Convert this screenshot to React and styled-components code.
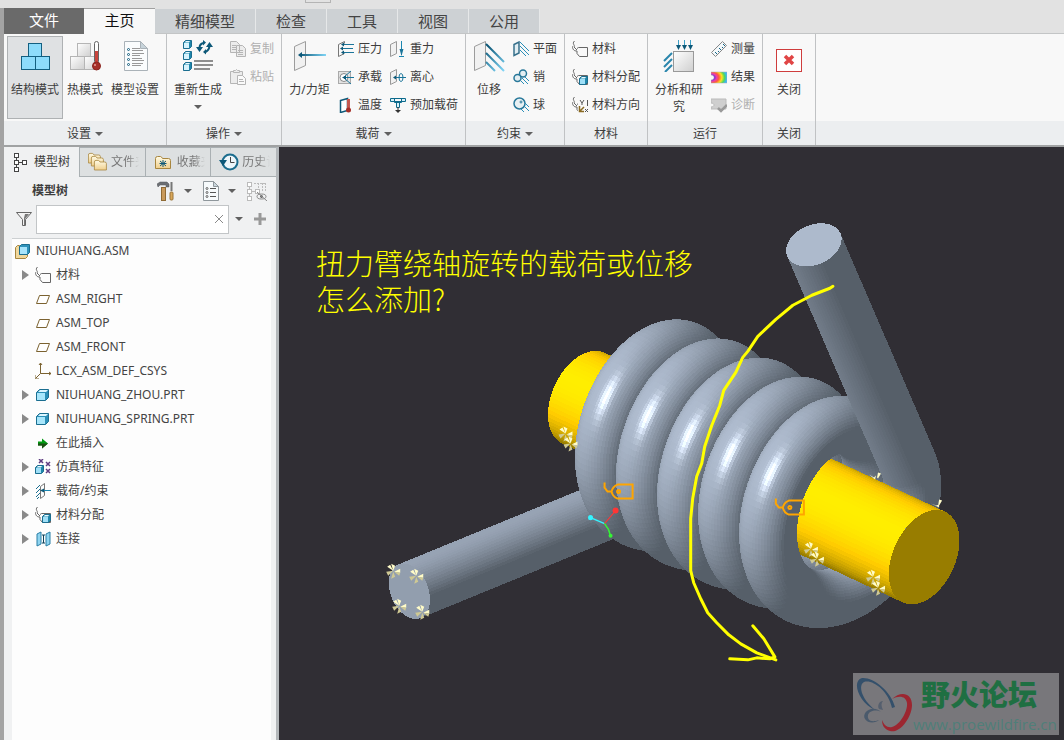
import { useMemo, useState } from "react";
import styled, { createGlobalStyle, css } from "styled-components";

const GlobalStyle = createGlobalStyle`
  * { box-sizing: border-box; }
  body {
    margin: 0;
    background: #e2e2e2;
    color: #3d3d3d;
    font: 12px/16px "Noto Sans", "Noto Sans CJK SC", sans-serif;
  }
  button, input {
    font: inherit;
    color: inherit;
  }
  button {
    border: 0;
    padding: 0;
    background: none;
    cursor: pointer;
  }
  svg { display: block; flex: none; }
`;

/* ---------- layout ---------- */

const Page = styled.div`
  display: flex;
  flex-direction: column;
  height: 100vh;
`;

const TitleStrip = styled.div`
  flex: none;
  height: 8px;
  padding-left: 305px;

  &::before {
    content: "";
    display: block;
    width: 24px;
    height: 2px;
    border: 1px solid #b4b4b4;
    border-top: 0;
  }
`;

const Shell = styled.div`
  flex: 1;
  min-height: 0;
  display: flex;
  flex-direction: column;
  border-left: 4px solid #a3a3a3;
`;

const TabBar = styled.nav`
  flex: none;
  display: flex;
  height: 26px;
  border-bottom: 1px solid #c3c5c6;
`;

const tabLook = {
  file: css`
    background: #6a6a6a;
    color: #fff;
    padding-bottom: 2px;
  `,
  active: css`
    background: #f8f8f8;
    border-top: 1px solid #a0a0a0;
    color: #111;
    padding-bottom: 3px;
  `,
  plain: css`
    background: #cdd1d4;
    color: #444;
    border-right: 1px solid #e6e8e9;
    margin-top: 1px;
    padding-bottom: 1px;
    height: 24px;
  `,
};

const RibbonTab = styled.button`
  width: ${(props) => props.$w}px;
  height: 26px;
  font-size: 15px;
  line-height: 22px;
  ${(props) => tabLook[props.$look]}
`;

const RibbonBar = styled.div`
  flex: none;
  display: flex;
  height: 113px;
  background: linear-gradient(#f8f8f8 87px, #eceef0 87px);
  border-bottom: 2px solid #a0a2a3;
`;

const Group = styled.section`
  display: flex;
  flex-direction: column;
  width: ${(props) => props.$w}px;
  border-right: 1px solid #c0c2c4;
`;

const GroupBody = styled.div`
  display: flex;
  height: 87px;
  padding: 1px 0 0 3px;
`;

const GroupName = styled.div`
  display: flex;
  align-items: center;
  justify-content: center;
  gap: 4px;
  height: 24px;
  padding-top: 1px;
`;

const BigButton = styled.button`
  display: flex;
  flex-direction: column;
  align-items: center;
  width: ${(props) => props.$w}px;
  height: 83px;
  margin-top: 1px;
  padding-top: 3px;
  border: 1px solid ${(props) => (props.$on ? "#aeb1b3" : "transparent")};
  background: ${(props) => (props.$on ? "#dfe1e3" : "none")};
`;

const BigLabel = styled.span`
  margin: 9px -4px 7px;
  line-height: 17px;
  white-space: ${(props) => (props.$wrap ? "normal" : "nowrap")};
  width: ${(props) => (props.$wrap ? "50px" : "auto")};
`;

const Column = styled.div`
  display: flex;
  flex-direction: column;
`;

const SmallButton = styled.button`
  display: flex;
  align-items: center;
  gap: 4px;
  height: 28px;
  padding: 0 4px;
  white-space: nowrap;

  &:disabled {
    color: #b0b0b0;
  }
`;

const Caret = styled.i`
  width: 0;
  border: 4px solid transparent;
  border-top: 4px solid #606060;
  border-bottom: 0;
`;

const Main = styled.main`
  flex: 1;
  min-height: 0;
  display: flex;
`;

const Side = styled.aside`
  flex: none;
  display: flex;
  flex-direction: column;
  width: 275px;
  background: #f0f1f2;
  border-right: 3px solid #b3b7ba;
`;

const SideTabs = styled.div`
  display: flex;
  height: 30px;
`;

const SideTab = styled.button`
  display: flex;
  align-items: center;
  gap: ${(props) => (props.$on ? 6 : 3)}px;
  flex: ${(props) => (props.$on ? "0 0 75px" : "1")};
  min-width: 0;
  padding-left: ${(props) => (props.$on ? 10 : 8)}px;
  padding-bottom: 1px;
  overflow: hidden;
  white-space: nowrap;
  ${(props) =>
    !props.$on &&
    css`
      background: #dde0e1;
      color: #777;
      border: 1px solid #aab0b3;
      border-right: 0;

      span {
        mask-image: linear-gradient(90deg, #000 16px, transparent 28px);
      }
    `}
`;

const SideHead = styled.div`
  display: flex;
  align-items: center;
  height: 27px;
  padding: 0 9px 0 28px;
`;

const SideTitle = styled.h2`
  flex: 1;
  margin: 0;
  font-size: 12px;
  font-weight: 700;
`;

const ToolButton = styled.button`
  display: flex;
  align-items: center;
  gap: 9px;
  margin-left: 11px;
`;

const SearchRow = styled.div`
  display: flex;
  align-items: center;
  height: 34px;
  padding: 0 12px 4px 12px;
  gap: 4px;
`;

const SearchBox = styled.div`
  flex: 1;
  display: flex;
  align-items: center;
  height: 29px;
  padding-right: 5px;
  background: #fff;
  border: 1px solid #c2c5c7;
`;

const SearchInput = styled.input`
  flex: 1;
  min-width: 0;
  height: 100%;
  border: 0;
  outline: 0;
  background: none;
`;

const SearchTools = styled.div`
  display: flex;
  align-items: center;
  gap: 11px;
  padding-left: 2px;
`;

const Tree = styled.ul`
  flex: 1;
  margin: 0 5px 0 8px;
  padding: 0;
  list-style: none;
  background: #fdfdfd;
  border-top: 1px solid #cdd0d2;
`;

const TreeRow = styled.li`
  display: flex;
  align-items: center;
  gap: 5px;
  height: 24px;
  padding-left: ${(props) => (props.$root ? 3 : 10)}px;
  color: #444;
  white-space: nowrap;
`;

const Expander = styled.button`
  width: 8px;
  height: 10px;
  visibility: ${(props) => (props.$hidden ? "hidden" : "visible")};

  &::before {
    content: "";
    display: block;
    width: 0;
    border: 5px solid transparent;
    border-left: 7px solid #8a8a8a;
    border-right: 0;
  }
`;

const Viewport = styled.div`
  flex: 1;
  min-width: 0;
  position: relative;
  overflow: hidden;
  background: #302e34;

  > svg {
    width: 100%;
    height: 100%;
  }
`;

const Note = styled.p`
  position: absolute;
  top: 97px;
  left: 37px;
  margin: 0;
  color: #ffff00;
  font: 300 29px/36px "Noto Sans CJK SC", sans-serif;
  white-space: pre;
`;

const Watermark = styled.a`
  position: absolute;
  right: 5px;
  bottom: 5px;
  display: flex;
  width: 206px;
  height: 62px;
  background: #78777b;
  text-decoration: none;
`;

const WatermarkText = styled.span`
  display: flex;
  flex-direction: column;
  align-items: flex-start;
  color: #4f7f79;
  font: 15px/20px "Open Sans", sans-serif;
  white-space: nowrap;

  b {
    padding-left: 8px;
    color: #1f6f42;
    font: 900 29px/41px "Noto Sans CJK SC", sans-serif;
  }
`;

/* ---------- icons ---------- */

const Icon = ({ s = 16, w = s, h = s, children }) => (
  <svg
    width={w}
    height={h}
    viewBox={`0 0 ${w} ${h}`}
    fill="none"
    stroke="#555"
    aria-hidden="true"
  >
    {children}
  </svg>
);

const Defs = () => (
  <svg width="0" height="0" style={{ position: "absolute" }} aria-hidden="true">
    <defs>
      <linearGradient id="cube" x2="1" y2="1">
        <stop stopColor="#fff" />
        <stop offset="1" stopColor="#cfcfcf" />
      </linearGradient>
      <linearGradient id="ray">
        <stop stopColor="#0d5878" />
        <stop offset="1" stopColor="#7fd4f5" />
      </linearGradient>
      <linearGradient id="beam" gradientUnits="userSpaceOnUse" x1="13" y1="8" x2="31" y2="30">
        <stop stopColor="#0d5878" />
        <stop offset="1" stopColor="#7fd4f5" />
      </linearGradient>
      <radialGradient id="fringe" cx="0" cy=".5" r="1">
        <stop offset=".2" stopColor="#6a2bd9" />
        <stop offset=".35" stopColor="#e83db0" />
        <stop offset=".5" stopColor="#ff5a3c" />
        <stop offset=".68" stopColor="#ffe21f" />
        <stop offset=".85" stopColor="#4fd85a" />
        <stop offset="1" stopColor="#35b6ff" />
      </radialGradient>
      <linearGradient id="folder" x2="0" y2="1">
        <stop stopColor="#fffbe6" />
        <stop offset="1" stopColor="#f0cf8c" />
      </linearGradient>
    </defs>
  </svg>
);

const Blocks = ({ thermal }) => (
  <Icon s={32}>
    <g
      fill={thermal ? "url(#cube)" : "#8ddcfb"}
      stroke={thermal ? "#b5b5b5" : "#135f80"}
      transform={thermal ? "translate(-1 0)" : undefined}
    >
      <rect x="9.5" y="3.5" width="13" height="13" />
      <rect x="2.5" y="16.5" width="14" height="13" />
      <rect x="16.5" y="16.5" width="14" height="13" />
    </g>
    {thermal && (
      <g>
        <rect x="25.5" y="1.5" width="4" height="22" rx="2" fill="#fff" stroke="#666" />
        <path d="M27.5 11v14" stroke="#c9443c" strokeWidth="3" />
        <circle cx="27.5" cy="26" r="4" fill="#a52f28" stroke="#8a241f" />
        <circle cx="26" cy="25" r="1" fill="#e8a09a" stroke="none" />
      </g>
    )}
  </Icon>
);

const ModelSetup = () => (
  <Icon s={32}>
    <path d="M5.5 1.5h16l7 7v22h-23z" fill="#fafcfd" stroke="#aab2b8" />
    <path d="M21.5 1.5v7h7z" fill="#c7d3da" stroke="#aab2b8" />
    {[9.5, 14.5, 19.5, 24.5].map((y, i) => (
      <g key={y}>
        <circle cx="9.5" cy={y} r="1" fill="#fff" stroke="#125d80" />
        <path d={`M13 ${y - 1}h${[8, 12, 10, 11][i]}M13 ${y + 1}h${[11, 8, 12, 9][i]}`} stroke="#999" />
      </g>
    ))}
  </Icon>
);

const MiniCube = ({ x = 0, y = 0, s = 8, face = "#d8f3fd" }) => (
  <g transform={`translate(${x} ${y})`} strokeWidth="1" strokeLinejoin="round">
    <path d={`M.5 2.5L2.5.5H${s + 0.5}v${s - 2}l-2 2H.5z`} fill="#1f86ab" stroke="#1b6e90" />
    <rect x="1" y="3" width={s - 3} height={s - 3} fill={face} stroke="none" />
    <path d={`M1.5 2.5L3 1h${s - 4}l-1 1.5z`} fill="#e8f9ff" stroke="none" />
  </g>
);

const Regenerate = () => (
  <Icon s={32}>
    <MiniCube x={1} y={0} />
    <MiniCube x={1} y={11} />
    <MiniCube x={1} y={22} />
    <g stroke="#0d5878" strokeWidth="2">
      <path d="M17.5 8c0-3 2-4.5 4-5M27.5 5c0 4-1 5.5-4 7" />
    </g>
    <path d="M14 7h7l-3.5 5zM24 7h7l-3.5-5zM21 0l3 2.5-3 3zM24 9l-3 3 3 2.5z" fill="#0d5878" stroke="none" />
    <path d="M12 21h19M12 25h19M12 29h16" stroke="#8e8e8e" strokeWidth="2" />
  </Icon>
);

const Copy = () => (
  <Icon>
    <g fill="#ececec" stroke="#b5b5b5">
      <path d="M.5.5h6l3 3v8h-9zM6.5 4.5h6l3 3v8h-9z" />
      <path d="M2 4.5h4M2 6.5h4M2 8.5h4M8 9.5h5M8 11.5h5M8 13.5h5" />
    </g>
  </Icon>
);

const Paste = () => (
  <Icon>
    <g fill="#ececec" stroke="#b5b5b5">
      <path d="M.5 2.5h12v12H.5z" />
      <path d="M3.5 3.5v-2h2l1-1 1 1h2v2z" />
      <path d="M7.5 6.5h5l3 3v6h-8z" fill="#fafafa" />
      <path d="M9 10.5h4M9 12.5h5" />
    </g>
  </Icon>
);

const panelPath = "M2.5 6.5l11-5v24l-11 5z";

const Force = () => (
  <Icon s={32}>
    <path d={panelPath} transform="translate(-2 0)" fill="#f1f1f1" stroke="#9c9c9c" />
    <rect x="6" y="14" width="26" height="2" fill="url(#ray)" stroke="none" />
    <path d="M4 15l4-3v6z" fill="#0d5878" stroke="none" />
  </Icon>
);

const Displacement = () => (
  <Icon s={32}>
    <path d={panelPath} transform="translate(-1 0)" fill="#f1f1f1" stroke="#9c9c9c" />
    <g stroke="url(#beam)" strokeWidth="2">
      <path d="M13 4l18 18M13 13l18 18M13 22l9 9" />
    </g>
  </Icon>
);

const Pressure = () => (
  <Icon>
    <path d="M.5 3.5l6-3v2M.5 3.5v12l6-3" stroke="#777" />
    <path d="M4 3.5h12M3 7.5h12M4 11.5h12" stroke="#1b759a" />
    <path d="M3 3.5l3-2v4zM2 7.5l3-2v4zM3 11.5l3-2v4z" fill="#0d5878" stroke="none" />
  </Icon>
);

const Bearing = () => (
  <Icon>
    <rect x=".5" y="2.5" width="12" height="12" fill="#e3e3e3" stroke="#aaa" />
    <circle cx="6" cy="8.5" r="4" fill="#fff" stroke="#888" />
    <path d="M5 8.5h11M6 8l7-6M6 9l7 6" stroke="#1b759a" />
    <path d="M4 8.5l4-2v4z" fill="#0d5878" stroke="none" />
  </Icon>
);

const Temperature = () => (
  <Icon>
    <path d="M2.5 3.5l7-2v12l-7 2z" stroke="#0d5878" strokeWidth="1.5" fill="#fff" />
    <path d="M10.5 2v10" stroke="#c4574f" strokeWidth="3" />
    <circle cx="10.5" cy="13" r="2.5" fill="#a52f28" stroke="none" />
  </Icon>
);

const Gravity = () => (
  <Icon>
    <path d="M.5 3.5l6-3v12l-6 3z" fill="#f1f1f1" stroke="#999" />
    <path d="M11.5 0v14M9 15.5h5" stroke="#1b86b0" />
    <path d="M11.5 15l-2-7h4z" fill="#1b759a" stroke="none" />
  </Icon>
);

const Centrifugal = () => (
  <Icon>
    <path d="M.5 3.5l6-3v12l-6 3z" fill="#f1f1f1" stroke="#999" />
    <path d="M4 8.5h12" stroke="#1b759a" />
    <ellipse cx="11" cy="8.5" rx="2" ry="4" stroke="#1b759a" />
    <path d="M3 8.5l3-2v4z" fill="#0d5878" stroke="none" />
  </Icon>
);

const Preload = () => (
  <Icon>
    <path d="M.5 1.5h15v3h-15zM4.5 1.5v4h7v-4M6.5 6v4.5h3V6" stroke="#0d6a8c" fill="#d8f1fa" />
    <path d="M8 10v4" stroke="#333" />
    <path d="M5 13h6l-3 3z" fill="#333" stroke="none" />
  </Icon>
);

const Plane = () => (
  <Icon>
    <path d="M1 3.5l5-2.5v11l-5 2.5z" fill="#e2eef3" stroke="#38718c" strokeWidth="1.5" />
    <path d="M7 1l9 9M7 5l9 9M7 9l6 6" stroke="#2a8fb8" />
  </Icon>
);

const Pin = () => (
  <Icon>
    <circle cx="10" cy="4.5" r="3.5" fill="#e4eef2" stroke="#28789a" strokeWidth="1.5" />
    <circle cx="4.5" cy="9" r="3.5" fill="#e4eef2" stroke="#28789a" strokeWidth="1.5" />
    <path d="M9 9l6 6M12 8l4 4M8 12l3 3" stroke="#2a8fb8" />
  </Icon>
);

const Ball = () => (
  <Icon>
    <circle cx="6.5" cy="6.5" r="5.5" fill="#e8f0f3" stroke="#28789a" strokeWidth="1.5" />
    <circle cx="8" cy="5" r="1" stroke="#28789a" fill="#fff" />
    <path d="M12 6l4 4M11 9l5 5M8 12l3 3" stroke="#2a8fb8" />
  </Icon>
);

const Tag = ({ kind }) => (
  <Icon>
    <path d="M2.5 0c-3 3 1 4-.5 6L5 9M5 7.5l1.5-1h9v9h-8l-2.5-3M0 5c1 4 2 5 5 5v2.5" stroke="#666" />
    {kind === "assign" && <MiniCube x={7} y={7} s={8} face="#9fdff7" />}
    {kind === "orient" && (
      <g>
        <rect x="6" y="4" width="10" height="12" fill="#f8f8f8" stroke="none" />
        <path d="M8 3l2 3 2-3M10 6v2M13 12l3 3M16 12l-3 3M15.5 3v6" stroke="#555" />
        <path d="M7.5 9v5.5H12M8 14l4-4" stroke="#8a6a22" strokeWidth="1.5" />
      </g>
    )}
  </Icon>
);

const Analysis = () => (
  <Icon s={32}>
    <rect x="10.5" y="11.5" width="20" height="20" fill="url(#cube)" stroke="#999" />
    <path d="M15.5 0v7M21.5 0v7M27.5 0v7" stroke="#3e9fc6" />
    <path d="M13 5h5l-2.5 5zM19 5h5l-2.5 5zM25 5h5l-2.5 5z" fill="#0d5878" stroke="none" />
    <path d="M9 13l-8 8M9 19l-8 8M9 25l-7 7" stroke="#2a86ad" strokeWidth="2" />
  </Icon>
);

const Ruler = () => (
  <Icon>
    <path d="M.5 11.5l11-11 4 4-11 11z" fill="#f3f8fa" stroke="#888" />
    <path d="M6 13l-2-2M8 11l-1-1M10 9L8 7M12 7l-1-1M14 5l-2-2" stroke="#146486" />
  </Icon>
);

const Results = () => (
  <Icon>
    <path d="M0 3h16v11H0v-3c4 0 4-5 0-5z" fill="url(#fringe)" stroke="#aaa" strokeWidth=".5" />
  </Icon>
);

const Diagnose = () => (
  <Icon>
    <path d="M0 2h15v10H0v-2c4 0 4-4 0-4z" fill="#cfcfcf" stroke="#bbb" />
    <path d="M7 11l3 3 6-6" stroke="#9a9a9a" strokeWidth="2.5" />
  </Icon>
);

const CloseIcon = () => (
  <Icon s={32}>
    <rect x="3.5" y="9.5" width="25" height="22" fill="#fff" stroke="#cf3d3d" />
    <path d="M12 16l8 8M20 16l-8 8" stroke="#e04545" strokeWidth="3.5" />
  </Icon>
);

const TreeIcon = ({ off }) => (
  <Icon w={off ? 20 : 14} h={20}>
    <g stroke={off ? "#bbb" : "#444"} fill="#fff">
      <path d="M2.5 4v12M2.5 10.5h8" />
      <rect x=".5" y="1.5" width="4" height="4" />
      <rect x=".5" y="8.5" width="4" height="4" />
      <rect x=".5" y="15.5" width="4" height="4" />
      <rect x="8.5" y="8.5" width="4" height="4" />
    </g>
    {off && (
      <g>
        <path d="M7 2.5h12M11.5 2v5M15.5 2v8M18.5 2v8" stroke="#bbb" strokeDasharray="2 1" />
        <ellipse cx="14.5" cy="15.5" rx="4.5" ry="2.5" fill="#f0f1f2" stroke="#888" />
        <circle cx="14.5" cy="15.5" r="1" fill="#888" />
        <path d="M10 11l10 9" stroke="#888" />
      </g>
    )}
  </Icon>
);

const Folder = ({ x = 0, y = 0, s = 1 }) => (
  <path
    transform={`translate(${x} ${y}) scale(${s})`}
    d="M.5 2.5q0-2 2-2h3q1 0 2 2h6q2 0 2 2v8h-15z"
    fill="url(#folder)"
    stroke="#a8863f"
  />
);

const Folders = () => (
  <Icon w={20} h={20}>
    <Folder x={0} y={1} s={0.8} />
    <Folder x={3} y={4} s={0.8} />
    <Folder x={6} y={8} s={0.8} />
  </Icon>
);

const Favorites = () => (
  <Icon w={20} h={18}>
    <Folder x={1} y={3} />
    <path d="M9 7v7M6 8l6 5M12 8l-6 5M5.5 10.5h7" stroke="#0d5878" />
  </Icon>
);

const HistoryIcon = () => (
  <Icon w={20} h={20}>
    <circle cx="11" cy="10" r="7.5" fill="#eef6fa" stroke="#1c6d8e" strokeWidth="2" />
    <path d="M11.5 5v5.5h4" stroke="#444" />
    <path d="M0 8h8l-4 6z" fill="#0d5878" stroke="none" />
  </Icon>
);

const Hammer = () => (
  <Icon w={18} h={20}>
    <path d="M0 3l3-2h7l2 2v3H9V4H3L1 6z" fill="#6c6f74" stroke="#55585c" strokeWidth=".5" />
    <rect x="4.5" y="6.5" width="4" height="13" fill="#c99a5b" stroke="#8f6a35" />
    <path d="M14.5 1v9" stroke="#777" strokeWidth="2" />
    <rect x="13" y="11" width="3" height="8" rx="1" fill="#d9a75a" stroke="#9a7438" />
  </Icon>
);

const DocList = () => (
  <Icon w={16} h={20}>
    <path d="M.5.5h10l5 5v14H.5z" fill="#f6fafc" stroke="#8f979c" />
    <path d="M10.5.5v5h5z" fill="#c9d6dd" stroke="#8f979c" />
    {[7.5, 11.5, 15.5].map((y) => (
      <g key={y}>
        <circle cx="4" cy={y} r="1" stroke="#666" />
        <path d={`M7 ${y}h6`} stroke="#555" />
      </g>
    ))}
  </Icon>
);

const Funnel = () => (
  <Icon>
    <path d="M.5 1.5h15l-6 7v6h-3v-6z" fill="#f3f3f3" stroke="#666" />
    <path d="M9 3h4l-4 5v6H8V7z" fill="#777" stroke="none" />
  </Icon>
);

const Plus = () => (
  <Icon s={12}>
    <path d="M6 0v12M0 6h12" stroke="#999" strokeWidth="3" />
  </Icon>
);

const AsmIcon = () => (
  <Icon>
    <path d="M.5 4.5l2-2h2v9h8v2l-2 2h-10z" fill="#f0d79c" stroke="#a8863f" />
    <path d="M4.5 3.5l2-2h8v8l-2 2h-8z" fill="#2f93bb" stroke="#1b6e90" />
    <path d="M5 4h7v7H5z" fill="#a8e4fb" stroke="none" />
  </Icon>
);

const DatumPlane = () => (
  <Icon>
    <path d="M4.5 4.5h10l-3 8h-10z" stroke="#7b6230" fill="#fff" />
  </Icon>
);

const Csys = () => (
  <Icon>
    <path d="M5.5 0v10.5H16M5.5 10.5L1 15M4 2l1.5-2L7 2M14 9l2 1.5-2 1.5M0 12v4h4" stroke="#7b6230" />
  </Icon>
);

const Part = () => (
  <Icon>
    <path d="M1.5 5.5l3-3h9v8l-3 3h-9z" fill="#2b8fb7" stroke="#1b6e90" />
    <rect x="2" y="6" width="8" height="7" fill="#a8e6fb" stroke="none" />
    <path d="M3 5l2-2h8l-2 2z" fill="#ddf6ff" stroke="none" />
  </Icon>
);

const Insert = () => (
  <Icon>
    <path d="M3 6.5h4v-3l6 5-6 5v-3H3z" fill="#009a10" stroke="none" />
    <path d="M3 8.5h10l-6 5v-3H3z" fill="#1d4d12" stroke="none" />
  </Icon>
);

const SimFeature = () => (
  <Icon>
    <MiniCube x={0} y={6} s={8} face="#9fdff7" />
    <path d="M4 0l4 4M8 0L4 4M11 3l4 4M15 3l-4 4M11 10l4 4M15 10l-4 4" stroke="#5f3d82" strokeWidth="1.5" />
  </Icon>
);

const LoadConstraint = () => (
  <Icon>
    <path d="M5.5 3.5l4-3v12l-4 3z" stroke="#777" />
    <path d="M6 7.5h10" stroke="#1b86b0" />
    <path d="M5 2L1 6M5 6l-4 4M5 10l-4 4M4 14l-2 2" stroke="#1b6e90" />
    <path d="M5 7.5l4-2v4z" fill="#0d5878" stroke="none" />
  </Icon>
);

const Connection = () => (
  <Icon>
    <path d="M2 3l4-2v12l-4 2zM11 3l4-2v12l-4 2z" fill="#8fd4f0" stroke="#2a7fa5" />
    <path d="M8.5 4v8M7 4h3M7 12h3" stroke="#0d4058" />
  </Icon>
);

/* ---------- 3D model ---------- */

// Orthographic view frame: x right, y down, z towards the viewer.
const AXIS = [0.709, 0.331, 0.6225];
const UP = [0.4226, -0.906, 0];
const OUT = [-0.564, -0.263, 0.7826];
const LIGHT = [-0.55, -0.5, 0.67];
const HALF = [-0.3, -0.27, 0.913];

const ORIGIN = [665, 437, 0];
const PITCH = 57.8;
const COIL_RADIUS = 87;
const WIRE_RADIUS = 29;
const ROD_RADIUS = 50;
const START = 214;
const END = 2131;

const rad = (deg) => (deg * Math.PI) / 180;
const dot = (a, b) => a[0] * b[0] + a[1] * b[1] + a[2] * b[2];
const mix = (...terms) =>
  [0, 1, 2].map((i) => terms.reduce((sum, [v, k]) => sum + v[i] * k, 0));

const steel = (n) => {
  const d = Math.max(0, dot(n, LIGHT));
  const s = 105 * Math.pow(Math.max(0, dot(n, HALF)), 60);
  return [86 + 89 * d + s, 95 + 93 * d + s, 105 + 102 * d + s];
};

const brass = (n) => {
  const d = Math.max(0, dot(n, LIGHT));
  return [152 + 150 * d, 125 + 114 * d, 0];
};

const toRgb = (c) => `rgb(${c.map((v) => Math.min(255, Math.round(v))).join()})`;

// rings: [{ center, a, b }], a and b span the ring's plane
const tubeFaces = (rings, radius, sides, paint) => {
  const faces = [];
  const at = (ring, k) => {
    const t = (k / sides) * Math.PI * 2;
    return mix(
      [ring.center, 1],
      [ring.a, radius * Math.cos(t)],
      [ring.b, radius * Math.sin(t)]
    );
  };
  for (let i = 0; i < rings.length - 1; i++) {
    for (let k = 0; k < sides; k++) {
      const t = ((k + 0.5) / sides) * Math.PI * 2;
      const n = mix([rings[i].a, Math.cos(t)], [rings[i].b, Math.sin(t)]);
      if (n[2] < -0.08) continue;
      const pts = [
        at(rings[i], k),
        at(rings[i + 1], k),
        at(rings[i + 1], k + 1),
        at(rings[i], k + 1),
      ];
      faces.push({ pts, z: pts.reduce((s, p) => s + p[2], 0) / 4, fill: toRgb(paint(n)) });
    }
  }
  return faces;
};

const capFace = (center, a, b, radius, fill) => {
  const pts = [];
  for (let t = 0; t < 360; t += 6) {
    pts.push(
      mix([center, 1], [a, radius * Math.cos(rad(t))], [b, radius * Math.sin(rad(t))])
    );
  }
  return { pts, z: center[2] + radius, fill };
};

const coilRing = (deg) => {
  const a = mix([UP, Math.cos(rad(deg))], [OUT, Math.sin(rad(deg))]);
  const center = mix([ORIGIN, 1], [AXIS, (PITCH * (deg - 487)) / 360], [a, COIL_RADIUS]);
  return { center, a, b: AXIS };
};

const buildModel = () => {
  const rings = [];
  const first = coilRing(START);
  const last = coilRing(END);
  const lowDir = mix([UP, Math.sin(rad(START))], [OUT, -Math.cos(rad(START))]);
  const highDir = mix([UP, -Math.sin(rad(END))], [OUT, Math.cos(rad(END))]);

  for (let d = 315; d > 0; d -= 9) {
    rings.push({ ...first, center: mix([first.center, 1], [lowDir, d]) });
  }
  for (let deg = START; deg <= END; deg += 3) rings.push(coilRing(deg));
  for (let d = 6; d <= 335; d += 9) {
    rings.push({ ...last, center: mix([last.center, 1], [highDir, d]) });
  }

  const rod = [];
  for (let d = -116; d <= 364; d += 4) {
    rod.push({ center: mix([ORIGIN, 1], [AXIS, d]), a: UP, b: OUT });
  }

  return [
    ...tubeFaces(rings, WIRE_RADIUS, 60, steel),
    ...tubeFaces(rod, ROD_RADIUS, 72, brass),
    capFace(rings[0].center, first.a, AXIS, WIRE_RADIUS, "#929eae"),
    capFace(rings[rings.length - 1].center, last.a, AXIS, WIRE_RADIUS, "#adbacc"),
    capFace(rod[rod.length - 1].center, UP, OUT, ROD_RADIUS, "#987d00"),
  ].sort((p, q) => p.z - q.z);
};

const CONSTRAINTS = [
  [393, 571], [416, 576], [399, 606], [422, 612], [565, 434], [570, 444],
  [810, 549], [816, 559], [872, 577], [877, 588],
];

const Spinner = ({ x, y }) => (
  <g transform={`translate(${x} ${y})`}>
    <path d="M0 0l-6-4 3-2zM0 0l-2-7 4 2zM1 1l6-3v4z" fill="#fffcc8" />
    <path d="M0 0l-7 1 2 4zM0 1l-2 7 4-2zM1 1l5 4 1-3z" fill="#cfc994" />
  </g>
);

const MaterialTag = ({ x, y }) => (
  <g transform={`translate(${x} ${y})`} fill="none" stroke="#ffa500" strokeWidth="2">
    <path d="M1 0v5l3 4h4M29 2v14H14q-5-2-6-7 1-5 6-7z" />
    <circle cx="15" cy="9" r="1.5" />
  </g>
);

const Model = () => {
  const faces = useMemo(buildModel, []);
  return (
    <svg
      viewBox="279 148 785 592"
      preserveAspectRatio="xMinYMin slice"
      role="img"
      aria-label="NIUHUANG.ASM"
    >
      <g shapeRendering="crispEdges">
        {faces.map((face, i) => (
          <polygon
            key={i}
            points={face.pts.map((p) => `${p[0].toFixed(2)},${p[1].toFixed(2)}`).join(" ")}
            fill={face.fill}
          />
        ))}
      </g>
      {CONSTRAINTS.map(([x, y]) => (
        <Spinner key={`${x}-${y}`} x={x} y={y} />
      ))}
      <path d="M868 475l5 3 2-2-1 4zM876 478l1-5 3 1-3 5zM930 504l5 2 3-1 0 3zM937 506l1-6 3 1-3 5z" fill="#fffcc8" />
      <MaterialTag x={603} y={483} />
      <MaterialTag x={774} y={499} />
      <path d="M604 524l-14-6" stroke="#35f4ff" strokeWidth="1.5" />
      <path d="M604 524l11-13" stroke="#ff3535" />
      <path d="M604 524l4 6 2 6" stroke="#35f435" strokeWidth="1.5" fill="none" />
      <circle cx="590" cy="518" r="2.5" fill="#35f4ff" />
      <circle cx="615" cy="511" r="3" fill="#ff3535" />
      <circle cx="610" cy="536" r="2" fill="#35f435" />
      <g fill="none" stroke="#ffff00" strokeWidth="3" strokeLinecap="round" strokeLinejoin="round">
        <path d="M832 287l-3 2-18 7-19 10-17 14-18 17-10 15-5 6-7 15-12 18-4 15-8 20-7 21-3 17-5 13-4 22-2 20v52l3 12 7 16 7 14 9 10 12 12 12 9 16 9 19 7" />
        <path d="M752 626l11 13 11 18-5 2-13-1-9 2-18-1" />
      </g>
    </svg>
  );
};

/* ---------- data ---------- */

const TABS = [
  ["文件", 80, "file"],
  ["主页", 71, "active"],
  ["精细模型", 101, "plain"],
  ["检查", 71, "plain"],
  ["工具", 71, "plain"],
  ["视图", 71, "plain"],
  ["公用", 71, "plain"],
];

const GROUPS = [
  {
    name: "设置", w: 163, menu: true,
    big: [
      { label: "结构模式", w: 56, icon: <Blocks />, on: true },
      { label: "热模式", w: 44, icon: <Blocks thermal /> },
      { label: "模型设置", w: 56, icon: <ModelSetup /> },
    ],
  },
  {
    name: "操作", w: 115, menu: true,
    big: [{ label: "重新生成", w: 56, icon: <Regenerate />, menu: true }],
    cols: [[["复制", <Copy />, true], ["粘贴", <Paste />, true]]],
  },
  {
    name: "载荷", w: 184, menu: true,
    big: [{ label: "力/力矩", w: 49, icon: <Force /> }],
    cols: [
      [["压力", <Pressure />], ["承载", <Bearing />], ["温度", <Temperature />]],
      [["重力", <Gravity />], ["离心", <Centrifugal />], ["预加载荷", <Preload />]],
    ],
  },
  {
    name: "约束", w: 99, menu: true,
    big: [{ label: "位移", w: 40, icon: <Displacement /> }],
    cols: [[["平面", <Plane />], ["销", <Pin />], ["球", <Ball />]]],
  },
  {
    name: "材料", w: 83,
    cols: [[["材料", <Tag />], ["材料分配", <Tag kind="assign" />], ["材料方向", <Tag kind="orient" />]]],
  },
  {
    name: "运行", w: 115,
    big: [{ label: "分析和研究", w: 56, icon: <Analysis />, wrap: true }],
    cols: [[["测量", <Ruler />], ["结果", <Results />], ["诊断", <Diagnose />, true]]],
  },
  {
    name: "关闭", w: 53,
    big: [{ label: "关闭", w: 46, icon: <CloseIcon /> }],
  },
];

const TREE = [
  ["材料", <Tag />, true],
  ["ASM_RIGHT", <DatumPlane />],
  ["ASM_TOP", <DatumPlane />],
  ["ASM_FRONT", <DatumPlane />],
  ["LCX_ASM_DEF_CSYS", <Csys />],
  ["NIUHUANG_ZHOU.PRT", <Part />, true],
  ["NIUHUANG_SPRING.PRT", <Part />, true],
  ["在此插入", <Insert />],
  ["仿真特征", <SimFeature />, true],
  ["载荷/约束", <LoadConstraint />, true],
  ["材料分配", <Tag kind="assign" />, true],
  ["连接", <Connection />, true],
];

/* ---------- parts ---------- */

const RibbonGroup = ({ group }) => (
  <Group $w={group.w}>
    <GroupBody>
      {(group.big || []).map((item) => (
        <BigButton key={item.label} $w={item.w} $on={item.on}>
          {item.icon}
          <BigLabel $wrap={item.wrap}>{item.label}</BigLabel>
          {item.menu && <Caret />}
        </BigButton>
      ))}
      {(group.cols || []).map((col) => (
        <Column key={col[0][0]}>
          {col.map(([label, icon, disabled]) => (
            <SmallButton key={label} disabled={disabled}>
              {icon}
              {label}
            </SmallButton>
          ))}
        </Column>
      ))}
    </GroupBody>
    <GroupName>
      {group.name}
      {group.menu && <Caret />}
    </GroupName>
  </Group>
);

const ModelTree = () => {
  const [query, setQuery] = useState("");

  return (
    <Side>
      <SideTabs>
        <SideTab $on>
          <TreeIcon />
          模型树
        </SideTab>
        <SideTab>
          <Folders />
          <span>文件夹</span>
        </SideTab>
        <SideTab>
          <Favorites />
          <span>收藏夹</span>
        </SideTab>
        <SideTab>
          <HistoryIcon />
          <span>历史记</span>
        </SideTab>
      </SideTabs>
      <SideHead>
        <SideTitle>模型树</SideTitle>
        <ToolButton aria-label="设置">
          <Hammer />
          <Caret />
        </ToolButton>
        <ToolButton aria-label="显示">
          <DocList />
          <Caret />
        </ToolButton>
        <ToolButton aria-label="隐藏">
          <TreeIcon off />
        </ToolButton>
      </SideHead>
      <SearchRow>
        <Funnel />
        <SearchBox>
          <SearchInput
            aria-label="过滤"
            value={query}
            onChange={(e) => setQuery(e.target.value)}
          />
          <button aria-label="清除" onClick={() => setQuery("")}>
            <Icon s={8}>
              <path d="M0 0l8 8M8 0L0 8" stroke="#8a8a8a" />
            </Icon>
          </button>
        </SearchBox>
        <SearchTools>
          <Caret />
          <button aria-label="添加">
            <Plus />
          </button>
        </SearchTools>
      </SearchRow>
      <Tree>
        <TreeRow $root>
          <AsmIcon />
          NIUHUANG.ASM
        </TreeRow>
        {TREE.map(([label, icon, open]) => (
          <TreeRow key={label}>
            <Expander $hidden={!open} aria-label={label} />
            {icon}
            {label}
          </TreeRow>
        ))}
      </Tree>
    </Side>
  );
};

const App = () => {
  return (
    <Page>
      <GlobalStyle />
      <Defs />
      <TitleStrip />
      <Shell>
        <TabBar>
          {TABS.map(([label, w, look]) => (
            <RibbonTab key={label} $w={w} $look={look}>
              {label}
            </RibbonTab>
          ))}
        </TabBar>
        <RibbonBar>
          {GROUPS.map((group) => (
            <RibbonGroup key={group.name} group={group} />
          ))}
        </RibbonBar>
        <Main>
          <ModelTree />
          <Viewport>
            <Model />
            <Note>{"扭力臂绕轴旋转的载荷或位移\n怎么添加?"}</Note>
            <Watermark href="#forum">
              <Icon w={60} h={62}>
                <path d="M42 34C38 18 20 4 9 5-2 8 6 30 22 37 8 26 5 12 11 9c8-3 24 8 28 26z" fill="#34506b" stroke="none" />
                <path d="M28 39c-8-8-20 0-16 7 3 5 11 4 14 1-8 3-12 0-11-5 1-4 8-6 13-3z" fill="#4a5a6c" stroke="none" />
                <path d="M26 36c-2-3 0-8 4-8-2 2-2 5 0 9z" fill="#555f6e" stroke="none" />
                <path d="M39 26c8-8 20-7 20 6 0 12-12 29-22 26-6-2-8-6-8-11 2 5 5 8 10 7 8-2 16-16 15-24-1-7-8-8-15-4z" fill="#9c2630" stroke="none" />
              </Icon>
              <WatermarkText>
                <b>野火论坛</b>
                www.proewildfire.cn
              </WatermarkText>
            </Watermark>
          </Viewport>
        </Main>
      </Shell>
    </Page>
  );
};

export default App;
